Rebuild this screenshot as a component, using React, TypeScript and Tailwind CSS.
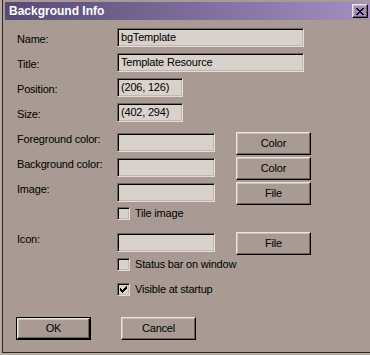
import React from "react";

const sunken =
  "border border-t-[#6e625c] border-l-[#6e625c] border-r-[#e4dcd6] border-b-[#e4dcd6] shadow-[inset_1px_1px_0_#000,inset_-1px_-1px_0_#c2b6ae] bg-[#d9d1cb]";
const raised =
  "border border-t-[#ebe5e0] border-l-[#ebe5e0] border-r-black border-b-black shadow-[inset_-1px_-1px_0_#6e625c,inset_1px_1px_0_#c9bfb8]";

type Run = [number, number, number];

function Pixels({ runs, w, h }: { runs: Run[]; w: number; h: number }) {
  return (
    <svg width={w} height={h} viewBox={`0 0 ${w} ${h}`} shapeRendering="crispEdges">
      {runs.map(([x, y, len], i) => (
        <rect key={i} x={x} y={y} width={len} height={1} fill="#000" />
      ))}
    </svg>
  );
}

const xRuns: Run[] = [
  [0, 0, 2], [6, 0, 2],
  [1, 1, 2], [5, 1, 2],
  [2, 2, 4],
  [3, 3, 2],
  [2, 4, 4],
  [1, 5, 2], [5, 5, 2],
  [0, 6, 2], [6, 6, 2],
];

const checkRuns: Run[] = [
  [6, 0, 1],
  [5, 1, 2],
  [0, 2, 1], [4, 2, 3],
  [0, 3, 2], [3, 3, 3],
  [0, 4, 5],
  [1, 5, 3],
  [2, 6, 1],
];

function Field({ w, value }: { w: number; value?: string }) {
  return (
    <div
      className={`${sunken} h-[19px] flex items-center pl-[3px] overflow-hidden whitespace-nowrap`}
      style={{ width: w }}
    >
      {value}
    </div>
  );
}

function Btn({ children, def }: { children: React.ReactNode; def?: boolean }) {
  if (def) {
    return (
      <div className="w-[75px] h-[23px] border border-black">
        <div className={`${raised} w-full h-full flex items-center justify-center`}>{children}</div>
      </div>
    );
  }
  return (
    <div className={`${raised} w-[75px] h-[23px] flex items-center justify-center`}>{children}</div>
  );
}

function Check({ label, checked }: { label: string; checked?: boolean }) {
  return (
    <div className="flex items-center h-[13px] ml-[100px]">
      <div className={`${sunken} w-[13px] h-[13px] flex items-center justify-center`}>
        {checked && <Pixels runs={checkRuns} w={7} h={7} />}
      </div>
      <span className="ml-[5px]">{label}</span>
    </div>
  );
}

function TopRow({ label, w, value }: { label: string; w: number; value: string }) {
  return (
    <div className="flex h-[19px]">
      <div className="w-[100px] mt-[5px]">{label}</div>
      <Field w={w} value={value} />
    </div>
  );
}

function BtnRow({ label, btn }: { label: string; btn: string }) {
  return (
    <div className="flex h-[23px]">
      <div className="w-[100px] mt-px">{label}</div>
      <div className="mt-px">
        <Field w={98} />
      </div>
      <div className="ml-[21px]">
        <Btn>{btn}</Btn>
      </div>
    </div>
  );
}

export default function App() {
  return (
    <div className="w-[370px] h-[355px] overflow-hidden bg-[#b5a9a1] pl-[2px] pb-[2px] font-['Liberation_Sans',Arial,sans-serif] text-[11px] leading-[13px] tracking-[-0.2px] text-[#000]">
      <div className="h-full flex flex-col border-l border-b border-[#2e2724] bg-[#a99b93] pl-[2px] pt-[2px]">
        <div className="h-[18px] flex items-center bg-gradient-to-r from-[#574b74] to-[#a48ec2] pl-[4px] pr-[2px]">
          <span className="flex-1 text-white font-bold text-[12px] leading-[14px] tracking-normal">Background Info</span>
          <div className={`${raised} w-[16px] h-[14px] flex items-center justify-center`}>
            <Pixels runs={xRuns} w={8} h={7} />
          </div>
        </div>
        <div className="flex flex-col pl-[12px] pt-[8px]">
          <div className="flex flex-col gap-[6px]">
            <TopRow label="Name:" w={187} value="bgTemplate" />
            <TopRow label="Title:" w={187} value="Template Resource" />
            <TopRow label="Position:" w={66} value="(206, 126)" />
            <TopRow label="Size:" w={66} value="(402, 294)" />
          </div>
          <div className="flex flex-col gap-[2px] mt-[10px]">
            <BtnRow label="Foreground color:" btn="Color" />
            <BtnRow label="Background color:" btn="Color" />
            <BtnRow label="Image:" btn="File" />
          </div>
          <div className="mt-[2px]">
            <Check label="Tile image" />
          </div>
          <div className="mt-[12px]">
            <BtnRow label="Icon:" btn="File" />
          </div>
          <div className="mt-[3px]">
            <Check label="Status bar on window" />
          </div>
          <div className="mt-[12px]">
            <Check label="Visible at startup" checked />
          </div>
          <div className="flex mt-[21px] -ml-px">
            <Btn def>OK</Btn>
            <div className="ml-[30px]">
              <Btn>Cancel</Btn>
            </div>
          </div>
        </div>
      </div>
    </div>
  );
}
